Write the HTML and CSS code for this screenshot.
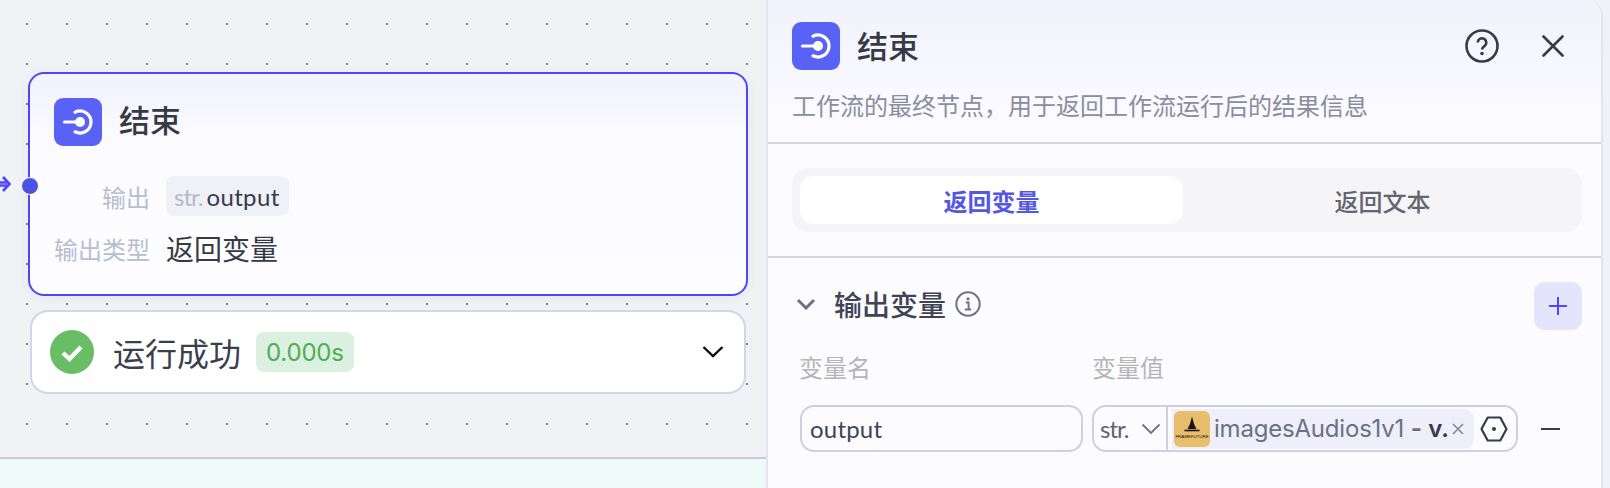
FILE: index.html
```html
<!DOCTYPE html>
<html lang="zh">
<head>
<meta charset="utf-8">
<title>结束</title>
<link rel="stylesheet" href="styles.css">
</head>
<body>
<div class="app">
  <section class="canvas">
    <div class="strip"></div>
    <svg class="edge-arrow" width="12" height="20" viewBox="0 0 12 20"><path d="M0 8.500H7M0 11.500H7M3 3L9.500 10L3 17" fill="none" stroke="#4f46f8" stroke-width="2.600"/></svg>
    <span class="handle"></span>
    <article class="node">
      <header class="node-head">
        <svg class="end-icon" width="48" height="48" viewBox="0 0 48 48"><rect width="48" height="48" rx="9" fill="#5a61f5"/><path d="M21 14.2A11 11 0 1 1 21 33.8" fill="none" stroke="#fff" stroke-width="3.2" stroke-linecap="round"/><path d="M10.5 24H25" stroke="#fff" stroke-width="3.2" stroke-linecap="round"/><circle cx="26" cy="24" r="5" fill="#fff"/></svg>
        <span class="node-title">结束</span>
      </header>
      <div class="node-row row-output">
        <span class="node-label">输出</span>
        <span class="node-tag"><span class="tag-type">str.</span> <span class="tag-name">output</span></span>
      </div>
      <div class="node-row">
        <span class="node-label">输出类型</span>
        <span class="node-value">返回变量</span>
      </div>
    </article>
    <div class="run">
      <svg width="44" height="44" viewBox="0 0 44 44"><circle cx="22" cy="22" r="22" fill="#68bd65"/><path d="M13 23L19.500 29L31 17" fill="none" stroke="#fff" stroke-width="4.400"/></svg>
      <span class="run-text">运行成功</span>
      <span class="run-time">0.000s</span>
      <svg class="run-chevron" width="22" height="14" viewBox="0 0 22 14"><path d="M1.500 2L11 11L20.500 2" fill="none" stroke="#0c0c0c" stroke-width="2.400"/></svg>
    </div>
  </section>

  <aside class="panel">
    <header class="panel-head">
      <div class="panel-title-row">
        <svg class="end-icon" width="48" height="48" viewBox="0 0 48 48"><rect width="48" height="48" rx="9" fill="#5a61f5"/><path d="M21 14.2A11 11 0 1 1 21 33.8" fill="none" stroke="#fff" stroke-width="3.2" stroke-linecap="round"/><path d="M10.5 24H25" stroke="#fff" stroke-width="3.2" stroke-linecap="round"/><circle cx="26" cy="24" r="5" fill="#fff"/></svg>
        <span class="panel-title">结束</span>
        <svg class="help" width="34" height="34" viewBox="0 0 34 34"><circle cx="17" cy="17" r="15.500" fill="none" stroke="#363a49" stroke-width="2.600"/><path d="M12.700 13.500a4.300 4.300 0 1 1 6.700 3.600c-1.500 1-2.400 1.800-2.400 3.500" fill="none" stroke="#363a49" stroke-width="2.600"/><circle cx="17" cy="24.500" r="1.800" fill="#363a49"/></svg>
        <svg class="close" width="22" height="22" viewBox="0 0 22 22"><path d="M1.500 1.500L20.500 20.500M20.500 1.500L1.500 20.500" fill="none" stroke="#363a49" stroke-width="2.600" stroke-linecap="round"/></svg>
      </div>
      <p class="panel-desc">工作流的最终节点，用于返回工作流运行后的结果信息</p>
    </header>
    <div class="tabs-wrap">
      <div class="tabs">
        <span class="tab active">返回变量</span>
        <span class="tab">返回文本</span>
      </div>
    </div>
    <section class="vars">
      <div class="vars-head">
        <svg class="vars-chevron" width="20" height="12" viewBox="0 0 20 12"><path d="M2 2L10 10L18 2" fill="none" stroke="#6c7085" stroke-width="3"/></svg>
        <span class="vars-title">输出变量</span>
        <svg class="info" width="26" height="26" viewBox="0 0 26 26"><circle cx="13" cy="13" r="11.700" fill="none" stroke="#6f7386" stroke-width="2"/><circle cx="13" cy="7.800" r="1.600" fill="#6f7386"/><path d="M10.800 11.500H13.600V18M9.800 18.500H16.200" fill="none" stroke="#6f7386" stroke-width="2"/></svg>
        <span class="add"><svg width="20" height="20" viewBox="0 0 20 20"><path d="M1 10H19M10 1V19" stroke="#4f46f8" stroke-width="2"/></svg></span>
      </div>
      <div class="col-labels">
        <span class="col-name">变量名</span>
        <span>变量值</span>
      </div>
      <div class="var-row">
        <div class="name-input">output</div>
        <div class="value-box">
          <div class="value-select">
            <span class="value-type">str.</span>
            <svg class="type-chevron" width="20" height="12" viewBox="0 0 20 12"><path d="M1.500 1.500L10 10L18.500 1.500" fill="none" stroke="#6c7085" stroke-width="1.800"/></svg>
          </div>
          <div class="value-cell">
            <div class="value-tag">
              <svg class="logo" width="36" height="36" viewBox="0 0 36 36"><rect width="36" height="36" rx="6" fill="#e8bd6b"/><path d="M18 5.500L20 13L22.500 18H13.500L16 13Z" fill="#14141a"/><path d="M10.500 19.500H25.500" stroke="#14141a" stroke-width="1.600"/><text x="18" y="27" text-anchor="middle" class="logo-text">FRAMEFUTURE</text></svg>
              <span class="value-name">imagesAudios1v1 <span class="dash">-</span> <b>v.</b></span>
              <svg class="tag-close" width="12" height="12" viewBox="0 0 12 12"><path d="M1 1L11 11M11 1L1 11" stroke="#85889a" stroke-width="1.600"/></svg>
            </div>
          </div>
          <svg class="hex" width="28" height="26" viewBox="0 0 28 26"><path d="M7.700 1.500H20.300L26.500 13L20.300 24.500H7.700L1.500 13Z" fill="none" stroke="#363a49" stroke-width="2.200" stroke-linejoin="round"/><circle cx="14" cy="13" r="2" fill="#363a49"/></svg>
        </div>
        <svg class="minus" width="20" height="4" viewBox="0 0 20 4"><path d="M0 2H19" stroke="#363a49" stroke-width="2"/></svg>
      </div>
    </section>
  </aside>
</div>
</body>
</html>
```
FILE: styles.css
```css
* { box-sizing: border-box; }
html, body { margin: 0; height: 488px; overflow: hidden; }
body {
  background: #f1f2f6;
  font-family: Inter, "Noto Sans CJK SC", sans-serif;
  color: #363a49;
}
p { margin: 0; }
svg { display: block; flex: none; }

.app { display: flex; width: 1610px; height: 488px; }

/* canvas */
.canvas { position: relative; width: 768px; height: 488px; background: #f1f2f5; border-right: 2px solid #e4e5ee; flex: none; overflow: hidden; }
.canvas::before {
  content: ""; position: absolute; left: 26px; top: 23px; right: 0; height: 410px;
  background-image: radial-gradient(circle at 1px 1px, #85868c 1px, transparent 1.01px);
  background-size: 40px 40px;
}
.strip { position: absolute; left: 0; right: 0; top: 457px; bottom: 0; background: #eef9fa; border-top: 2px solid #c9ccdb; }
.edge-arrow { position: absolute; left: 0; top: 174px; }
.handle { position: absolute; z-index: 2; left: 21px; top: 177px; width: 18px; height: 18px; border-radius: 50%; background: #4f52e0; border: 1.500px solid #fff; }

.node {
  position: absolute; left: 28px; top: 72px; width: 720px; height: 224px;
  border: 2px solid #4f46f8; border-radius: 16px;
  background: linear-gradient(#f3f3fe 0, #f5f5fe 28px, #fcfcff 75px, #fdfdff 100%);
  box-shadow: 0 2px 12px rgba(60, 60, 90, .06);
  padding: 24px 24px 0;
}
.node-head { display: flex; align-items: center; gap: 17px; height: 48px; margin-bottom: 30px; }
.node-title { font-size: 31px; font-weight: 500; line-height: 46px; margin-top: -2px; color: #363a45; }
.node-row { display: flex; align-items: center; gap: 16px; height: 40px; }
.row-output { margin-bottom: 12px; }
.node-label { width: 96px; text-align: right; font-size: 24px; color: #b8bdd0; white-space: nowrap; }
.node-tag { display: flex; align-items: center; gap: 4px; height: 40px; padding: 0 9px 0 8px; background: #f0f1f7; border-radius: 8px; font-family: Lato, "Noto Sans CJK SC", sans-serif; font-size: 24px; }
.tag-type { color: #b5b9cc; letter-spacing: -1px; }
.tag-name { color: #363a4f; letter-spacing: .35px; }
.node-value { font-size: 28px; color: #363a45; white-space: nowrap; }

.run {
  position: absolute; left: 30px; top: 310px; width: 716px; height: 84px;
  display: flex; align-items: center;
  background: #fff; border: 2px solid #d3d5e4; border-radius: 18px;
  padding: 0 20px 0 18px;
}
.run-text { margin-left: 19px; font-size: 32px; color: #3a3f4f; white-space: nowrap; }
.run-time { margin-left: 15px; height: 40px; padding: 0 10px; display: flex; align-items: center; background: #dbf0e1; border-radius: 8px; font-size: 24px; letter-spacing: -.2px; color: #4caf50; }
.run-chevron { margin-left: auto; }

/* panel */
.panel { width: 835px; height: 488px; flex: none; background: #fcfcff; border-right: 2px solid #e4e5ee; border-top-right-radius: 16px; overflow: hidden; }
.panel-head { height: 144px; padding: 22px 19px 0 24px; background: linear-gradient(#f2f2fd 0, #fcfcff 100%); border-bottom: 2px solid #d3d5e4; }
.panel-title-row { display: flex; align-items: center; height: 48px; }
.panel-title { margin-left: 17px; margin-top: -4px; font-size: 31px; font-weight: 500; color: #363a45; }
.help { margin-left: auto; }
.close { margin-left: 43px; margin-right: 18px; }
.panel-desc { margin-top: 20px; font-size: 24px; line-height: 34px; color: #8a8d9c; white-space: nowrap; }

.tabs-wrap { height: 114px; padding: 24px 19px 0 24px; border-bottom: 2px solid #d3d5e4; }
.tabs { display: flex; gap: 8px; height: 64px; padding: 8px; background: #f5f5f7; border-radius: 16px; }
.tab { flex: 1; display: flex; align-items: center; justify-content: center; border-radius: 14px; font-size: 24px; color: #646570; font-weight: 500; }
.tab.active { background: #fff; color: #5457e4; font-weight: 700; }

.vars { padding: 24px 19px 0 24px; }
.vars-head { display: flex; align-items: center; height: 48px; }
.vars-chevron { margin-left: 4px; margin-top: -4px; }
.vars-title { margin-left: 18px; margin-top: -4px; font-size: 28px; font-weight: 500; color: #3f4356; }
.info { margin-left: 9px; margin-top: -4px; }
.add { margin-left: auto; width: 48px; height: 48px; display: flex; align-items: center; justify-content: center; background: #e4e5fd; border-radius: 10px; }

.col-labels { display: flex; margin-top: 22px; padding-left: 7px; font-size: 24px; line-height: 34px; color: #b5b5b8; }
.col-name { width: 293px; }

.var-row { display: flex; align-items: center; margin-top: 19px; margin-left: 8px; }
.name-input { width: 283px; height: 47px; padding-left: 8px; display: flex; align-items: center; border: 2px solid #cdd0e2; border-radius: 14px; font-family: Lato, sans-serif; font-size: 24px; letter-spacing: .2px; color: #3f4356; }
.value-box { margin-left: 9px; width: 426px; height: 47px; display: flex; align-items: center; border: 2px solid #cdd0e2; border-radius: 14px; }
.value-select { width: 72px; flex: none; display: flex; align-items: center; padding-left: 6px; }
.value-type { width: 41px; font-family: Lato, sans-serif; font-size: 24px; letter-spacing: -1px; color: #5e6275; }
.value-cell { height: 43px; display: flex; align-items: center; border-left: 2px solid #cdd0e2; padding-left: 4px; }
.value-tag { width: 302px; height: 40px; display: flex; align-items: center; padding-left: 2px; background: #eeeffa; border-radius: 0 10px 10px 0; }
.logo-text { font-family: "Liberation Sans", sans-serif; font-size: 4.400px; fill: #14141a; }
.value-name { margin-left: 4px; font-size: 24px; letter-spacing: -.2px; color: #6c7085; white-space: nowrap; }
.value-name b { color: #363a4f; font-weight: 600; }
.dash { font-weight: 700; }
.tag-close { margin-left: 3px; }
.hex { margin-left: 6px; }
.minus { margin-left: 23px; }
```
